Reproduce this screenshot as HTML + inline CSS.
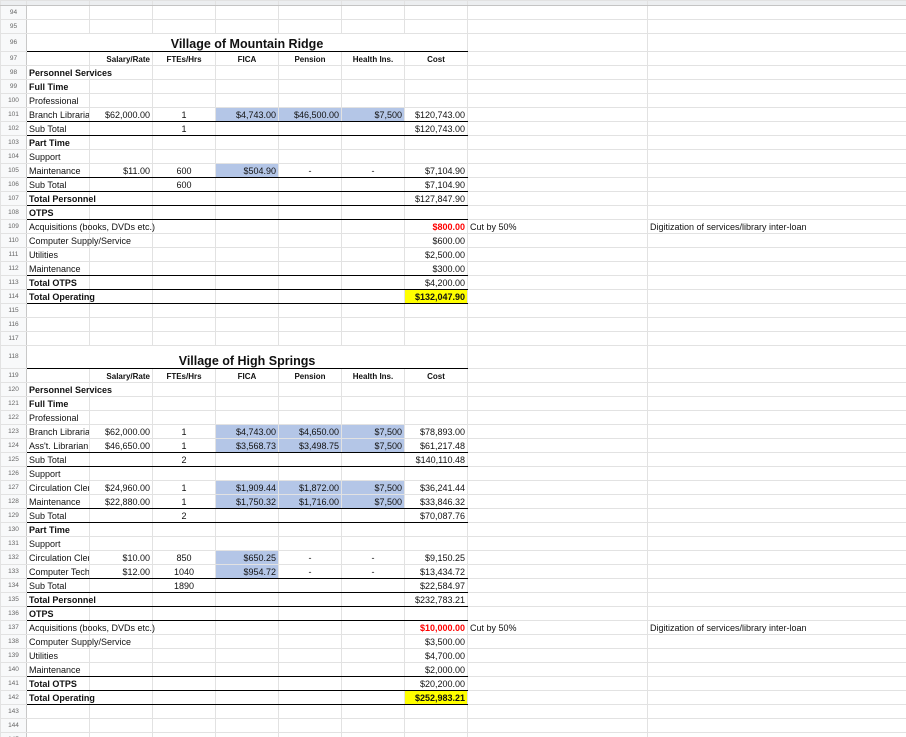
<!DOCTYPE html>
<html><head><meta charset="utf-8">
<style>
html,body{margin:0;padding:0;background:#fff;width:906px;height:737px;overflow:hidden}
table{border-collapse:collapse;table-layout:fixed;width:906px;font-family:"Liberation Sans",Arial,sans-serif;font-size:9px;color:#111}
td{border:1px solid #e2e2e2;padding:0 2px;white-space:nowrap;overflow:hidden;height:13px;line-height:11px;vertical-align:bottom}
td.n{background:#f8f9fa;color:#666;font-size:6.5px;text-align:center;padding:0;border-right:1px solid #c8c8c8;vertical-align:middle;line-height:8px}
tr.h td{height:4px;background:#eceef0;border-bottom:1px solid #c4c4c4;padding:0;line-height:4px}
.v{overflow:visible}
.b{font-weight:bold}
.r{text-align:right}
.c{text-align:center}
.bl{background:#b4c6e7}
.y{background:#ffff00;font-weight:bold}
.red{color:#f00;font-weight:bold}
.hd{font-weight:bold;font-size:8px}
tr.k td:nth-child(n+2):nth-child(-n+8){border-bottom:1px solid #000}
tr.t td{height:17px}
tr.t2 td{height:22px}
.ti{text-align:center;font-size:12.5px;font-weight:bold;color:#111;line-height:14px;overflow:visible;border-bottom:1px solid #000 !important}
</style></head><body>
<table>
<colgroup><col style="width:26px"><col style="width:63px"><col style="width:63px"><col style="width:63px"><col style="width:63px"><col style="width:63px"><col style="width:63px"><col style="width:63px"><col style="width:180px"><col style="width:259px"></colgroup>
<tr class="h"><td></td><td></td><td></td><td></td><td></td><td></td><td></td><td></td><td></td><td></td></tr>
<tr><td class="n">94</td><td></td><td></td><td></td><td></td><td></td><td></td><td></td><td></td><td></td></tr>
<tr><td class="n">95</td><td></td><td></td><td></td><td></td><td></td><td></td><td></td><td></td><td></td></tr>
<tr class="t"><td class="n">96</td><td colspan="7" class="ti">Village of Mountain Ridge</td><td></td><td></td></tr>
<tr><td class="n">97</td><td></td><td class="r hd">Salary/Rate</td><td class="c hd">FTEs/Hrs</td><td class="c hd">FICA</td><td class="c hd">Pension</td><td class="c hd">Health Ins.</td><td class="c hd">Cost</td><td></td><td></td></tr>
<tr><td class="n">98</td><td class="b v">Personnel Services</td><td></td><td></td><td></td><td></td><td></td><td></td><td></td><td></td></tr>
<tr><td class="n">99</td><td class="b">Full Time</td><td></td><td></td><td></td><td></td><td></td><td></td><td></td><td></td></tr>
<tr><td class="n">100</td><td>Professional</td><td></td><td></td><td></td><td></td><td></td><td></td><td></td><td></td></tr>
<tr class="k"><td class="n">101</td><td>Branch Librarian</td><td class="r">$62,000.00</td><td class="c">1</td><td class="r bl">$4,743.00</td><td class="r bl">$46,500.00</td><td class="r bl">$7,500</td><td class="r">$120,743.00</td><td></td><td></td></tr>
<tr class="k"><td class="n">102</td><td>Sub Total</td><td></td><td class="c">1</td><td></td><td></td><td></td><td class="r">$120,743.00</td><td></td><td></td></tr>
<tr><td class="n">103</td><td class="b">Part Time</td><td></td><td></td><td></td><td></td><td></td><td></td><td></td><td></td></tr>
<tr><td class="n">104</td><td>Support</td><td></td><td></td><td></td><td></td><td></td><td></td><td></td><td></td></tr>
<tr class="k"><td class="n">105</td><td>Maintenance</td><td class="r">$11.00</td><td class="c">600</td><td class="r bl">$504.90</td><td class="c">-</td><td class="c">-</td><td class="r">$7,104.90</td><td></td><td></td></tr>
<tr class="k"><td class="n">106</td><td>Sub Total</td><td></td><td class="c">600</td><td></td><td></td><td></td><td class="r">$7,104.90</td><td></td><td></td></tr>
<tr class="k"><td class="n">107</td><td class="b v">Total Personnel</td><td></td><td></td><td></td><td></td><td></td><td class="r">$127,847.90</td><td></td><td></td></tr>
<tr class="k"><td class="n">108</td><td class="b">OTPS</td><td></td><td></td><td></td><td></td><td></td><td></td><td></td><td></td></tr>
<tr><td class="n">109</td><td class="v">Acquisitions (books, DVDs etc.)</td><td></td><td></td><td></td><td></td><td></td><td class="r red">$800.00</td><td>Cut by 50%</td><td class="v">Digitization of services/library inter-loan</td></tr>
<tr><td class="n">110</td><td class="v">Computer Supply/Service</td><td></td><td></td><td></td><td></td><td></td><td class="r">$600.00</td><td></td><td></td></tr>
<tr><td class="n">111</td><td>Utilities</td><td></td><td></td><td></td><td></td><td></td><td class="r">$2,500.00</td><td></td><td></td></tr>
<tr class="k"><td class="n">112</td><td>Maintenance</td><td></td><td></td><td></td><td></td><td></td><td class="r">$300.00</td><td></td><td></td></tr>
<tr class="k"><td class="n">113</td><td class="b">Total OTPS</td><td></td><td></td><td></td><td></td><td></td><td class="r">$4,200.00</td><td></td><td></td></tr>
<tr class="k"><td class="n">114</td><td class="b v">Total Operating</td><td></td><td></td><td></td><td></td><td></td><td class="r y">$132,047.90</td><td></td><td></td></tr>
<tr><td class="n">115</td><td></td><td></td><td></td><td></td><td></td><td></td><td></td><td></td><td></td></tr>
<tr><td class="n">116</td><td></td><td></td><td></td><td></td><td></td><td></td><td></td><td></td><td></td></tr>
<tr><td class="n">117</td><td></td><td></td><td></td><td></td><td></td><td></td><td></td><td></td><td></td></tr>
<tr class="t2"><td class="n">118</td><td colspan="7" class="ti">Village of High Springs</td><td></td><td></td></tr>
<tr><td class="n">119</td><td></td><td class="r hd">Salary/Rate</td><td class="c hd">FTEs/Hrs</td><td class="c hd">FICA</td><td class="c hd">Pension</td><td class="c hd">Health Ins.</td><td class="c hd">Cost</td><td></td><td></td></tr>
<tr><td class="n">120</td><td class="b v">Personnel Services</td><td></td><td></td><td></td><td></td><td></td><td></td><td></td><td></td></tr>
<tr><td class="n">121</td><td class="b">Full Time</td><td></td><td></td><td></td><td></td><td></td><td></td><td></td><td></td></tr>
<tr><td class="n">122</td><td>Professional</td><td></td><td></td><td></td><td></td><td></td><td></td><td></td><td></td></tr>
<tr><td class="n">123</td><td>Branch Librarian</td><td class="r">$62,000.00</td><td class="c">1</td><td class="r bl">$4,743.00</td><td class="r bl">$4,650.00</td><td class="r bl">$7,500</td><td class="r">$78,893.00</td><td></td><td></td></tr>
<tr class="k"><td class="n">124</td><td>Ass't. Librarian</td><td class="r">$46,650.00</td><td class="c">1</td><td class="r bl">$3,568.73</td><td class="r bl">$3,498.75</td><td class="r bl">$7,500</td><td class="r">$61,217.48</td><td></td><td></td></tr>
<tr class="k"><td class="n">125</td><td>Sub Total</td><td></td><td class="c">2</td><td></td><td></td><td></td><td class="r">$140,110.48</td><td></td><td></td></tr>
<tr><td class="n">126</td><td>Support</td><td></td><td></td><td></td><td></td><td></td><td></td><td></td><td></td></tr>
<tr><td class="n">127</td><td>Circulation Clerk</td><td class="r">$24,960.00</td><td class="c">1</td><td class="r bl">$1,909.44</td><td class="r bl">$1,872.00</td><td class="r bl">$7,500</td><td class="r">$36,241.44</td><td></td><td></td></tr>
<tr class="k"><td class="n">128</td><td>Maintenance</td><td class="r">$22,880.00</td><td class="c">1</td><td class="r bl">$1,750.32</td><td class="r bl">$1,716.00</td><td class="r bl">$7,500</td><td class="r">$33,846.32</td><td></td><td></td></tr>
<tr class="k"><td class="n">129</td><td>Sub Total</td><td></td><td class="c">2</td><td></td><td></td><td></td><td class="r">$70,087.76</td><td></td><td></td></tr>
<tr><td class="n">130</td><td class="b">Part Time</td><td></td><td></td><td></td><td></td><td></td><td></td><td></td><td></td></tr>
<tr><td class="n">131</td><td>Support</td><td></td><td></td><td></td><td></td><td></td><td></td><td></td><td></td></tr>
<tr><td class="n">132</td><td>Circulation Clerk</td><td class="r">$10.00</td><td class="c">850</td><td class="r bl">$650.25</td><td class="c">-</td><td class="c">-</td><td class="r">$9,150.25</td><td></td><td></td></tr>
<tr class="k"><td class="n">133</td><td>Computer Tech</td><td class="r">$12.00</td><td class="c">1040</td><td class="r bl">$954.72</td><td class="c">-</td><td class="c">-</td><td class="r">$13,434.72</td><td></td><td></td></tr>
<tr class="k"><td class="n">134</td><td>Sub Total</td><td></td><td class="c">1890</td><td></td><td></td><td></td><td class="r">$22,584.97</td><td></td><td></td></tr>
<tr class="k"><td class="n">135</td><td class="b v">Total Personnel</td><td></td><td></td><td></td><td></td><td></td><td class="r">$232,783.21</td><td></td><td></td></tr>
<tr class="k"><td class="n">136</td><td class="b">OTPS</td><td></td><td></td><td></td><td></td><td></td><td></td><td></td><td></td></tr>
<tr><td class="n">137</td><td class="v">Acquisitions (books, DVDs etc.)</td><td></td><td></td><td></td><td></td><td></td><td class="r red">$10,000.00</td><td>Cut by 50%</td><td class="v">Digitization of services/library inter-loan</td></tr>
<tr><td class="n">138</td><td class="v">Computer Supply/Service</td><td></td><td></td><td></td><td></td><td></td><td class="r">$3,500.00</td><td></td><td></td></tr>
<tr><td class="n">139</td><td>Utilities</td><td></td><td></td><td></td><td></td><td></td><td class="r">$4,700.00</td><td></td><td></td></tr>
<tr class="k"><td class="n">140</td><td>Maintenance</td><td></td><td></td><td></td><td></td><td></td><td class="r">$2,000.00</td><td></td><td></td></tr>
<tr class="k"><td class="n">141</td><td class="b">Total OTPS</td><td></td><td></td><td></td><td></td><td></td><td class="r">$20,200.00</td><td></td><td></td></tr>
<tr class="k"><td class="n">142</td><td class="b v">Total Operating</td><td></td><td></td><td></td><td></td><td></td><td class="r y">$252,983.21</td><td></td><td></td></tr>
<tr><td class="n">143</td><td></td><td></td><td></td><td></td><td></td><td></td><td></td><td></td><td></td></tr>
<tr><td class="n">144</td><td></td><td></td><td></td><td></td><td></td><td></td><td></td><td></td><td></td></tr>
<tr><td class="n">145</td><td></td><td></td><td></td><td></td><td></td><td></td><td></td><td></td><td></td></tr>
</table>
</body></html>
